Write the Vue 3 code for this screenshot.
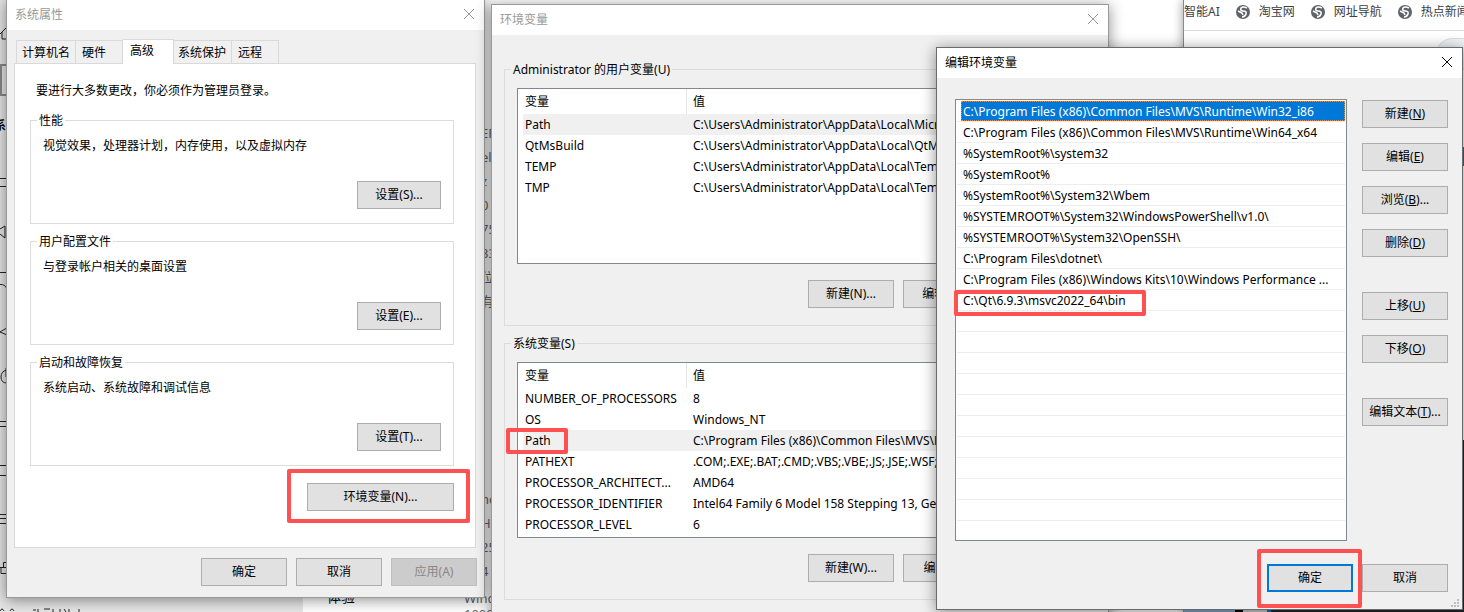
<template>
  <div class="desktop">
    <!-- 后面的设置窗口 -->
    <div class="settings">
      <div class="settings_side">
        <svg class="side_icons" width="7" height="612" fill="none" stroke="#222">
          <path d="M0 34L6 28M2 32V39H7" />
          <path d="M7 65H1V95H7" stroke="#888" stroke-width="2" />
          <path d="M0 178.5H7M0 186.5H7V191" />
          <path d="M0 229L5 226V238L0 234" />
          <path d="M0 272.5H7M0 284.5Q5 284 7 289" />
          <path d="M7 328Q3 330 0 332L7 335" />
          <path d="M7 370Q1 371 1 377Q1 383 7 383M6 368V377" />
          <path d="M0 421.5H7M0 426.5H7M0 465.5H7M0 475.5H7" />
          <path d="M0 514.5H7M0 518.5H7M0 523.5H7" />
          <path d="M3.5 567V562.5H7M1 567V573.5H7M0 567.5H7" />
        </svg>
        <div class="side_label">系统</div>
        <svg class="side_bottom" width="90" height="4" fill="none" stroke="#222">
          <path d="M0 3Q2 -1 4 3M10 3Q12 -1 14 3M33 2H36M38 1V4M44 1H50M53 1V4M60 1V4M64 1L66 4M69 1V4M79 1V4" />
        </svg>
      </div>
      <div class="settings_main">
        <div class="specs">
          <div v-for="(text, i) in specs" :key="i" class="spec">{{ text }}</div>
        </div>
        <div class="spec_label">体验</div>
        <div class="spec_last">Windows<br />1000</div>
      </div>
    </div>

    <!-- 浏览器 -->
    <div class="browser">
      <nav class="bookmarks">
        <a href="#">智能AI</a>
        <a v-for="name in bookmarks" :key="name" href="#">
          <svg width="14" height="14" viewBox="0 0 14 14">
            <circle cx="7" cy="7" r="7" fill="#5f6368" />
            <path
              d="M11 3Q7 1 5 3Q4 6 7 6Q11 6 10 9Q9 12 6 12M2 6L6 8L7 10"
              fill="none"
              stroke="#fff"
              stroke-width="1.6"
            />
          </svg>
          {{ name }}
        </a>
      </nav>
      <div class="search_pill"></div>
      <div class="browser_blue"></div>
      <div class="browser_dark"></div>
      <div class="taskbar"><i></i><i></i><i></i><i></i><i></i></div>
    </div>

    <!-- 系统属性 -->
    <section class="window props">
      <header class="title inactive">
        <span>系统属性</span>
        <button class="close" aria-label="关闭">
          <svg width="12" height="12"><path d="M1 1L11 11M11 1L1 11" /></svg>
        </button>
      </header>
      <div class="tabs">
        <button
          v-for="tab in tabs"
          :key="tab"
          :class="['tab', { active: tab === activeTab }]"
          @click="activeTab = tab"
        >
          {{ tab }}
        </button>
      </div>
      <div class="panel">
        <p class="notice">要进行大多数更改，你必须作为管理员登录。</p>
        <fieldset v-for="group in groups" :key="group.title" class="group">
          <legend>{{ group.title }}</legend>
          <p>{{ group.text }}</p>
          <button class="btn setting">设置({{ group.key }})...</button>
        </fieldset>
        <div class="env_row">
          <div class="marked mark_env">
            <button class="btn env">环境变量(N)...</button>
          </div>
        </div>
      </div>
      <footer class="props_footer">
        <button class="btn">确定</button>
        <button class="btn">取消</button>
        <button class="btn" disabled>应用(A)</button>
      </footer>
    </section>

    <!-- 环境变量 -->
    <section class="window vars">
      <header class="title inactive">
        <span>环境变量</span>
        <button class="close" aria-label="关闭">
          <svg width="12" height="12"><path d="M1 1L11 11M11 1L1 11" /></svg>
        </button>
      </header>
      <fieldset v-for="block in variables" :key="block.title" class="var_group">
        <legend>{{ block.title }}</legend>
        <div class="list">
          <table>
            <thead>
              <tr>
                <th class="col_name">变量</th>
                <th>值</th>
              </tr>
            </thead>
            <tbody>
              <tr v-for="row in block.rows" :key="row[0]" :class="{ selected: row[0] === 'Path' }">
                <td>
                  <span :class="{ marked: block.mark === row[0], mark_path: block.mark === row[0] }">{{ row[0] }}</span>
                </td>
                <td>{{ row[1] }}</td>
              </tr>
            </tbody>
          </table>
        </div>
        <div class="var_buttons">
          <button v-for="label in block.buttons" :key="label" class="btn">{{ label }}</button>
        </div>
      </fieldset>
    </section>

    <!-- 编辑环境变量 -->
    <section class="window edit">
      <header class="title">
        <span>编辑环境变量</span>
        <button class="close" aria-label="关闭">
          <svg width="12" height="12"><path d="M1 1L11 11M11 1L1 11" /></svg>
        </button>
      </header>
      <div class="edit_body">
        <ul class="paths">
          <li v-for="n in 20" :key="n" @click="selectPath(n - 1)">
            <span
              v-if="paths[n - 1]"
              :class="['path', { current: selectedPath === n - 1, marked: n === 10, mark_qt: n === 10 }]"
              >{{ paths[n - 1] }}</span
            >
          </li>
        </ul>
        <div class="edit_side">
          <button v-for="b in editButtons" :key="b.key" :class="['btn', { spaced: b.spaced }]">
            {{ b.text }}(<u>{{ b.key }}</u>){{ b.more }}
          </button>
        </div>
      </div>
      <footer class="edit_footer">
        <div class="marked mark_ok"><button class="btn primary">确定</button></div>
        <button class="btn">取消</button>
      </footer>
      <svg class="grip" width="9" height="9" fill="#bfbfbf">
        <path d="M6 0h2v2h-2zM3 3h2v2h-2zM6 3h2v2h-2zM0 6h2v2h-2zM3 6h2v2h-2zM6 6h2v2h-2z" />
      </svg>
    </section>
  </div>
</template>

<script setup>
import { ref } from 'vue'

const specs = ['ER', 'el', 'z', '0', '75', '33', '位', '有', '', '', '', '', '', '', '', 'nc', 'H2', '25', '4']
const bookmarks = ['淘宝网', '网址导航', '热点新闻']

const tabs = ['计算机名', '硬件', '高级', '系统保护', '远程']
const activeTab = ref('高级')

const groups = [
  { title: '性能', text: '视觉效果，处理器计划，内存使用，以及虚拟内存', key: 'S' },
  { title: '用户配置文件', text: '与登录帐户相关的桌面设置', key: 'E' },
  { title: '启动和故障恢复', text: '系统启动、系统故障和调试信息', key: 'T' }
]

// 用户变量和系统变量
const variables = [
  {
    title: 'Administrator 的用户变量(U)',
    rows: [
      ['Path', 'C:\\Users\\Administrator\\AppData\\Local\\Microsoft'],
      ['QtMsBuild', 'C:\\Users\\Administrator\\AppData\\Local\\QtMsBuild'],
      ['TEMP', 'C:\\Users\\Administrator\\AppData\\Local\\Temp'],
      ['TMP', 'C:\\Users\\Administrator\\AppData\\Local\\Temp']
    ],
    buttons: ['新建(N)...', '编辑(E)...', '删除(D)']
  },
  {
    title: '系统变量(S)',
    mark: 'Path',
    rows: [
      ['NUMBER_OF_PROCESSORS', '8'],
      ['OS', 'Windows_NT'],
      ['Path', 'C:\\Program Files (x86)\\Common Files\\MVS\\Runtime'],
      ['PATHEXT', '.COM;.EXE;.BAT;.CMD;.VBS;.VBE;.JS;.JSE;.WSF;.WSH;.MSC'],
      ['PROCESSOR_ARCHITECT...', 'AMD64'],
      ['PROCESSOR_IDENTIFIER', 'Intel64 Family 6 Model 158 Stepping 13, GenuineIntel'],
      ['PROCESSOR_LEVEL', '6']
    ],
    buttons: ['新建(W)...', '编辑(I)...', '删除(L)']
  }
]

const paths = [
  'C:\\Program Files (x86)\\Common Files\\MVS\\Runtime\\Win32_i86',
  'C:\\Program Files (x86)\\Common Files\\MVS\\Runtime\\Win64_x64',
  '%SystemRoot%\\system32',
  '%SystemRoot%',
  '%SystemRoot%\\System32\\Wbem',
  '%SYSTEMROOT%\\System32\\WindowsPowerShell\\v1.0\\',
  '%SYSTEMROOT%\\System32\\OpenSSH\\',
  'C:\\Program Files\\dotnet\\',
  'C:\\Program Files (x86)\\Windows Kits\\10\\Windows Performance ...',
  'C:\\Qt\\6.9.3\\msvc2022_64\\bin'
]
const selectedPath = ref(0)

const editButtons = [
  { text: '新建', key: 'N' },
  { text: '编辑', key: 'E' },
  { text: '浏览', key: 'B', more: '...' },
  { text: '删除', key: 'D' },
  { text: '上移', key: 'U', spaced: true },
  { text: '下移', key: 'O' },
  { text: '编辑文本', key: 'T', more: '...', spaced: true }
]

function selectPath(index) {
  if (paths[index]) selectedPath.value = index
}
</script>

<style>
body {
  overflow: hidden;
}
</style>

<style scoped>
.desktop {
  position: relative;
  height: 100vh;
  overflow: hidden;
  background: #fff;
  color: #000;
  font: 12px/16px 'Noto Sans', 'Noto Sans CJK SC', sans-serif;
}

.desktop * {
  box-sizing: border-box;
}

p {
  margin: 0;
}

button {
  font: inherit;
  color: inherit;
  padding: 0;
}

/* 设置窗口 */
.settings {
  position: absolute;
  inset: 0 281px 0 0;
  display: flex;
}

.settings_side {
  position: relative;
  width: 303px;
  background: #e6e6e6;
}

.side_icons {
  position: absolute;
  left: 0;
  top: 0;
}

.side_label {
  position: absolute;
  left: -6px;
  top: 118px;
  font-weight: bold;
}

.side_bottom {
  position: absolute;
  left: 0;
  bottom: 0;
}

.settings_main {
  position: relative;
  flex: 1;
}

.specs {
  position: absolute;
  left: 178px;
  top: 121px;
  color: #666;
  font-size: 13px;
}

.spec {
  height: 24px;
  line-height: 24px;
}

.spec:nth-child(15) {
  height: 30px;
}

.spec_label {
  position: absolute;
  left: 24px;
  top: 589px;
  font-size: 14px;
}

.spec_last {
  position: absolute;
  left: 161px;
  top: 590px;
  color: #666;
  font-size: 13px;
}

/* 浏览器 */
.browser {
  position: absolute;
  left: 1183px;
  right: 0;
  top: 0;
  bottom: 0;
  overflow: hidden;
  background: #fff;
  border-left: 1px solid #888;
  box-shadow: 0 0 10px rgba(0, 0, 0, 0.4);
}

.bookmarks {
  display: flex;
  gap: 16px;
  height: 31px;
  padding-top: 4px;
  border-bottom: 1px solid #ddd;
  white-space: nowrap;
}

.bookmarks a {
  display: flex;
  flex-shrink: 0;
  gap: 9px;
  align-items: center;
  height: 16px;
  color: #3c4043;
  text-decoration: none;
}

.search_pill {
  position: absolute;
  left: 252px;
  top: 38px;
  width: 60px;
  height: 32px;
  border: 1px solid #ddd;
  border-radius: 16px;
  background: #f1f3f4;
}

.browser_blue {
  position: absolute;
  right: 0;
  top: 147px;
  width: 4px;
  height: 19px;
  background: #1a6fb0;
}

.browser_dark {
  position: absolute;
  right: 0;
  top: 440px;
  bottom: 0;
  width: 8px;
  background: #25262b;
}

.taskbar {
  position: absolute;
  left: 0;
  right: 0;
  bottom: 0;
  height: 4px;
  display: flex;
}

.taskbar i {
  width: 51px;
  background: #7ba7cc;
}

.taskbar i:nth-child(2) {
  width: 8px;
  background: #000;
}

.taskbar i:nth-child(3) {
  width: 24px;
  background: #ccc;
}

.taskbar i:nth-child(4) {
  width: 4px;
  background: #0078d7;
}

.taskbar i:nth-child(5) {
  flex: 1;
  background: #25262b;
}

/* 窗口 */
.window {
  position: absolute;
  background: #f0f0f0;
  border: 1px solid #999;
  box-shadow: 0 2px 14px rgba(0, 0, 0, 0.45);
}

.title {
  display: flex;
  align-items: center;
  justify-content: space-between;
  height: 30px;
  padding: 0 9px 0 8px;
  background: #fff;
}

.title.inactive {
  color: #999;
}

.close {
  display: flex;
  padding-bottom: 2px;
  border: none;
  background: none;
}

.close svg {
  fill: none;
  stroke: currentColor;
}

.btn {
  width: 86px;
  height: 28px;
  border: 1px solid #adadad;
  background: #e1e1e1;
  white-space: nowrap;
}

.btn:disabled {
  border-color: #bfbfbf;
  background: #ccc;
  color: #888;
}

.btn.primary {
  display: block;
  border: 2px solid #0078d7;
}

/* 红色标记框 */
.marked {
  position: relative;
}

.marked::after {
  content: '';
  position: absolute;
  z-index: 2;
  border: 4px solid #ff5151;
  border-radius: 2px;
  pointer-events: none;
}

.mark_env::after {
  inset: -14px -16px -12px -20px;
}

.mark_path::after {
  inset: -4px -17px -5px -19px;
}

.mark_qt::after {
  inset: 0 -20px -6px -7px;
}

.mark_ok::after {
  inset: -15px -9px -16px -10px;
}

/* 系统属性 */
.props {
  left: 6px;
  top: -1px;
  width: 479px;
  padding-bottom: 11px;
}

.tabs {
  display: flex;
  align-items: flex-end;
  height: 33px;
  padding-left: 9px;
}

.tab {
  height: 23px;
  padding: 2px 5px 0 4px;
  border: 1px solid #d9d9d9;
  border-bottom: none;
  border-left-width: 0;
  background: #f0f0f0;
}

.tab:first-child {
  padding-left: 5px;
  border-left-width: 1px;
}

.tab:nth-child(2),
.tab:last-child {
  padding-left: 6px;
  padding-right: 16px;
}

.tab.active {
  position: relative;
  height: 25px;
  margin-bottom: -1px;
  padding: 0 19px 2px 7px;
  background: #fff;
}

.panel {
  margin: 0 8px 0 7px;
  padding: 19px 21px 36px 15px;
  border: 1px solid #d9d9d9;
  background: #fff;
}

.notice {
  padding-left: 6px;
}

.group {
  margin: 12px 0 0;
  padding: 9px 12px 14px;
  border: 1px solid #dcdcdc;
}

.group + .group {
  margin-top: 8px;
}

legend {
  margin-left: -6px;
  padding: 2px 2px 0;
}

.btn.setting {
  display: block;
  width: 84px;
  margin: 27px 0 0 auto;
}

.env_row {
  display: flex;
  justify-content: flex-end;
  margin-top: 17px;
}

.btn.env {
  display: block;
  width: 147px;
}

.props_footer {
  display: flex;
  justify-content: flex-end;
  gap: 9px;
  padding: 10px 7px 0 0;
}

/* 环境变量 */
.vars {
  left: 491px;
  top: 4px;
  width: 618px;
  padding-bottom: 60px;
}

.var_group {
  margin: 25px 12px 0;
  padding: 10px 11px 17px 12px;
  border: 1px solid #dcdcdc;
}

.var_group + .var_group {
  margin-top: 8px;
}

.list {
  height: 176px;
  padding-left: 5px;
  border: 1px solid #828790;
  background: #fff;
}

table {
  width: 100%;
  border-collapse: separate;
  border-spacing: 0;
  table-layout: fixed;
}

th,
td {
  height: 21px;
  padding: 0 6px;
  font-weight: normal;
  text-align: left;
  white-space: nowrap;
}

th {
  height: 25px;
}

th:first-child,
td:first-child {
  padding: 0 0 0 2px;
}

.col_name {
  width: 164px;
  border-right: 1px solid #e5e5e5;
}

.selected {
  background: #f0f0f0;
}

.var_buttons {
  display: flex;
  justify-content: flex-end;
  gap: 9px;
  margin-top: 16px;
}

/* 编辑环境变量 */
.edit {
  left: 936px;
  top: 47px;
  width: 527px;
  border-color: #6b6b6b;
}

.edit_body {
  display: flex;
  gap: 15px;
  padding: 21px 14px 0 18px;
}

.paths {
  flex: 1;
  height: 442px;
  margin: 0;
  padding: 1px;
  border: 1px solid #828790;
  background: #fff;
  list-style: none;
}

.paths li {
  display: flex;
  height: 21px;
  padding-left: 4px;
  border-bottom: 1px solid #ededed;
}

.path {
  height: 20px;
  padding: 1px 0 0 2px;
  line-height: 20px;
  white-space: nowrap;
}

.path.current {
  flex: 1;
  background: #0078d7;
  color: #fff;
  outline: 1px dotted #ff8728;
  outline-offset: -1px;
}

.edit_side {
  display: flex;
  flex-direction: column;
  gap: 15px;
  padding-top: 1px;
}

.btn.spaced {
  margin-top: 20px;
}

.edit_footer {
  display: flex;
  justify-content: flex-end;
  gap: 9px;
  padding: 23px 14px 17px 0;
}

.grip {
  position: absolute;
  right: 2px;
  bottom: 1px;
}
</style>
